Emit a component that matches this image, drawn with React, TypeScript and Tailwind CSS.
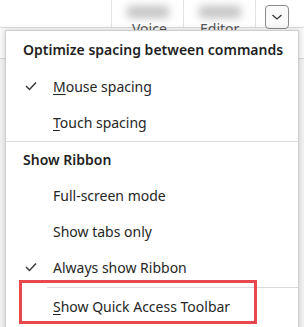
import { ReactNode } from "react";

const font = { fontFamily: '"Noto Sans", "Open Sans", sans-serif' };

function Check() {
  return (
    <svg width="12" height="10" viewBox="0 0 12 10" className="text-[#3b3b3b]">
      <path d="M1 5 L4.5 8.5 L11 1.5" fill="none" stroke="currentColor" strokeWidth="1.5" />
    </svg>
  );
}

function Item({ checked, children }: { checked?: boolean; children: ReactNode }) {
  return (
    <div className="flex h-[36px] items-center text-[14px] text-[#262626]">
      <div className="flex w-[47px] justify-center pl-[2px]">{checked && <Check />}</div>
      <span>{children}</span>
    </div>
  );
}

export default function App() {
  return (
    <div className="relative h-[327px] w-[304px] overflow-hidden bg-[#f3f3f3]" style={font}>
      {/* ribbon behind the menu */}
      <div className="flex h-[28px] border-b border-[#dcdcdc] bg-white">
        <div className="w-[112px] border-r border-[#e3e3e3]" />
        <div className="relative w-[72px] border-r border-[#e3e3e3]">
          <div className="absolute left-[14px] top-[6px] h-[12px] w-[44px] rounded-full bg-[#9a9a9a] blur-[4px] opacity-60" />
          <span className="absolute left-[20px] top-[19px] text-[14px] leading-[20px] text-[#555]">Voice</span>
        </div>
        <div className="relative w-[72px] border-r border-[#e3e3e3]">
          <div className="absolute left-[14px] top-[6px] h-[12px] w-[44px] rounded-full bg-[#9a9a9a] blur-[4px] opacity-60" />
          <span className="absolute left-[16px] top-[19px] text-[14px] leading-[20px] text-[#555]">Editor</span>
        </div>
        <div className="flex flex-1 items-start pl-[9px] pt-[5px]">
          <div className="flex h-[24px] w-[24px] items-center justify-center rounded-[4px] border border-[#8a8a8a] bg-[#fafafa]">
            <svg width="12" height="8" viewBox="0 0 12 8">
              <path d="M1.5 2 L6 6 L10.5 2" fill="none" stroke="#333" strokeWidth="1.2" />
            </svg>
          </div>
        </div>
      </div>
      <div className="h-[31px] border-b border-[#d6d6d6] bg-[#fafafa]" />

      {/* dropdown menu */}
      <div className="absolute left-[5px] top-[30px] w-[294px] border border-[#cfcfcf] bg-white pb-[10px] shadow-[0_0_6px_rgba(0,0,0,0.18)]">
        <div className="flex h-[37px] items-center pl-[17px] text-[14px] font-semibold text-[#1f1f1f]">
          Optimize spacing between commands
        </div>
        <Item checked>
          <u className="underline-offset-2">M</u>ouse spacing
        </Item>
        <Item>
          <u className="underline-offset-2">T</u>ouch spacing
        </Item>
        <div className="mt-[1px] border-t border-[#dadada]" />
        <div className="flex h-[35px] items-center pl-[17px] text-[14px] font-semibold text-[#1f1f1f]">
          Show Ribbon
        </div>
        <Item>Full-screen mode</Item>
        <Item>Show tabs only</Item>
        <Item checked>Always show Ribbon</Item>
        <div className="ml-[41px] mt-[2px] border-t border-[#dadada]" />
        <Item>
          <u className="underline-offset-2">S</u>how Quick Access Toolbar
        </Item>
      </div>

      {/* highlight box */}
      <div className="absolute left-[19px] top-[280px] h-[44px] w-[238px] border-[3px] border-[#e8474d]" />
    </div>
  );
}
